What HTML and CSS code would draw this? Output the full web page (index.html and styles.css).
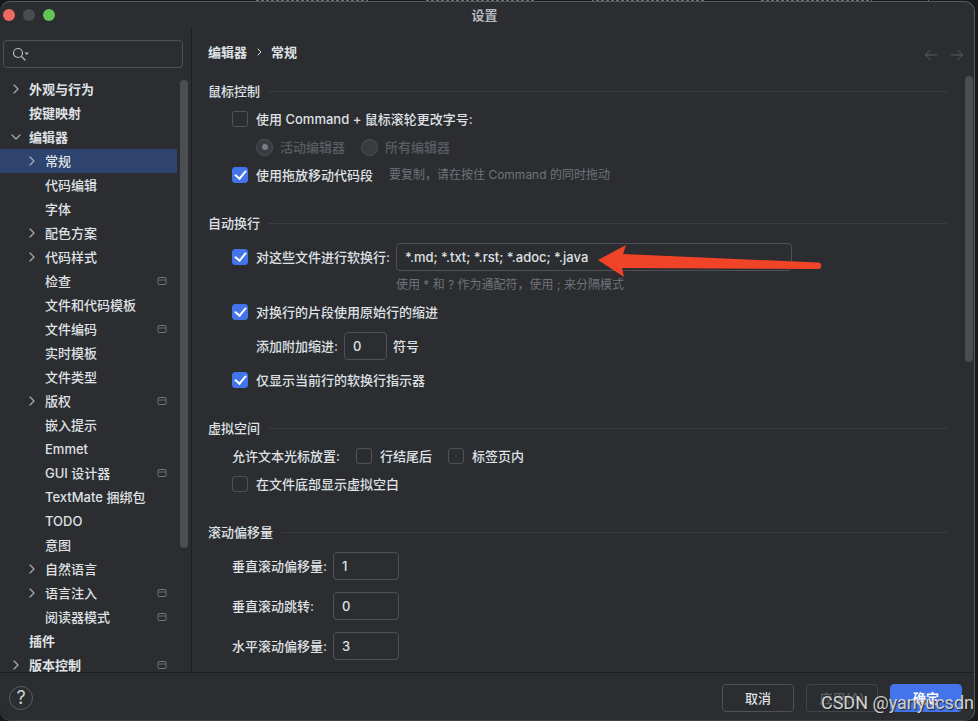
FILE: index.html
```html
<!DOCTYPE html>
<html lang="zh-CN">
<head>
    <meta charset="UTF-8">
    <meta name="viewport" content="width=device-width, initial-scale=1.0">
    <title>设置</title>
    <link rel="stylesheet" href="styles.css">
</head>
<body>
    <!-- Shared icons -->
    <svg class="sprite" aria-hidden="true">
        <symbol id="chevron" viewBox="0 0 16 16">
            <path d="M6 4 10 8l-4 4" fill="none" stroke="currentColor" stroke-width="1.200" stroke-linecap="round" stroke-linejoin="round"/>
        </symbol>
        <symbol id="project" viewBox="0 0 10 10">
            <rect x="1" y="1.5" width="8" height="7" rx="1" fill="none" stroke="currentColor"/>
            <path d="M1 4h8" stroke="currentColor"/>
        </symbol>
    </svg>

    <div class="dialog">
        <header class="titlebar">
            <div class="lights">
                <span class="light close"></span>
                <span class="light minimize"></span>
                <span class="light zoom"></span>
            </div>
            <h1>设置</h1>
        </header>

        <div class="content">
            <aside class="sidebar">
                <label class="search">
                    <svg width="20" height="16" viewBox="0 0 20 16" fill="none" stroke="currentColor" stroke-width="1.200" stroke-linecap="round">
                        <circle cx="6" cy="7" r="4.5"/>
                        <path d="m9.500 10.500 3.500 3.500"/>
                        <path d="M12.500 6.500h4.500l-2.250 2.500z" fill="currentColor" stroke="none"/>
                    </svg>
                    <input type="text" aria-label="搜索">
                </label>
                <div class="tree-wrap">
                    <nav class="tree">
                        <a href="#" class="item top"><svg class="arrow"><use href="#chevron"/></svg><span>外观与行为</span></a>
                        <a href="#" class="item top"><i class="arrow"></i><span>按键映射</span></a>
                        <a href="#" class="item top"><svg class="arrow open"><use href="#chevron"/></svg><span>编辑器</span></a>
                        <a href="#" class="item selected"><svg class="arrow"><use href="#chevron"/></svg><span>常规</span></a>
                        <a href="#" class="item"><i class="arrow"></i><span>代码编辑</span></a>
                        <a href="#" class="item"><i class="arrow"></i><span>字体</span></a>
                        <a href="#" class="item"><svg class="arrow"><use href="#chevron"/></svg><span>配色方案</span></a>
                        <a href="#" class="item"><svg class="arrow"><use href="#chevron"/></svg><span>代码样式</span></a>
                        <a href="#" class="item"><i class="arrow"></i><span>检查</span><svg class="project"><use href="#project"/></svg></a>
                        <a href="#" class="item"><i class="arrow"></i><span>文件和代码模板</span></a>
                        <a href="#" class="item"><i class="arrow"></i><span>文件编码</span><svg class="project"><use href="#project"/></svg></a>
                        <a href="#" class="item"><i class="arrow"></i><span>实时模板</span></a>
                        <a href="#" class="item"><i class="arrow"></i><span>文件类型</span></a>
                        <a href="#" class="item"><svg class="arrow"><use href="#chevron"/></svg><span>版权</span><svg class="project"><use href="#project"/></svg></a>
                        <a href="#" class="item"><i class="arrow"></i><span>嵌入提示</span></a>
                        <a href="#" class="item"><i class="arrow"></i><span>Emmet</span></a>
                        <a href="#" class="item"><i class="arrow"></i><span>GUI 设计器</span><svg class="project"><use href="#project"/></svg></a>
                        <a href="#" class="item"><i class="arrow"></i><span>TextMate 捆绑包</span></a>
                        <a href="#" class="item"><i class="arrow"></i><span>TODO</span></a>
                        <a href="#" class="item"><i class="arrow"></i><span>意图</span></a>
                        <a href="#" class="item"><svg class="arrow"><use href="#chevron"/></svg><span>自然语言</span></a>
                        <a href="#" class="item"><svg class="arrow"><use href="#chevron"/></svg><span>语言注入</span><svg class="project"><use href="#project"/></svg></a>
                        <a href="#" class="item"><i class="arrow"></i><span>阅读器模式</span><svg class="project"><use href="#project"/></svg></a>
                        <a href="#" class="item top"><i class="arrow"></i><span>插件</span></a>
                        <a href="#" class="item top"><svg class="arrow"><use href="#chevron"/></svg><span>版本控制</span><svg class="project"><use href="#project"/></svg></a>
                    </nav>
                    <div class="track"><div class="thumb tree-thumb"></div></div>
                </div>
            </aside>

            <main class="page">
                <div class="page-header">
                    <nav class="crumbs">
                        <a href="#">编辑器</a>
                        <svg width="8" height="8" viewBox="0 0 8 8" fill="none" stroke="currentColor" stroke-linecap="round" stroke-linejoin="round"><path d="m3 1 3 3-3 3"/></svg>
                        <a href="#">常规</a>
                    </nav>
                    <div class="history">
                        <button type="button" aria-label="后退" disabled>
                            <svg width="14" height="12" viewBox="0 0 14 12"><path d="M12.500 6h-11M6 1.500 1.500 6 6 10.500"/></svg>
                        </button>
                        <button type="button" aria-label="前进" disabled>
                            <svg width="14" height="12" viewBox="0 0 14 12"><path d="M1.500 6h11M8 1.500 12.500 6 8 10.500"/></svg>
                        </button>
                    </div>
                </div>

                <div class="page-body">
                    <form class="settings">
                        <section>
                            <h2>鼠标控制</h2>
                            <div class="row">
                                <label><input type="checkbox">使用 Command + 鼠标滚轮更改字号:</label>
                            </div>
                            <div class="row indent radios">
                                <label><input type="radio" name="scope" checked disabled>活动编辑器</label>
                                <label><input type="radio" name="scope" disabled>所有编辑器</label>
                            </div>
                            <div class="row">
                                <label><input type="checkbox" checked>使用拖放移动代码段</label>
                                <span class="comment">要复制，请在按住 Command 的同时拖动</span>
                            </div>
                        </section>

                        <section>
                            <h2>自动换行</h2>
                            <div class="wrap-grid">
                                <label><input type="checkbox" checked>对这些文件进行软换行:</label>
                                <div class="patterns">
                                    <input type="text" value="*.md; *.txt; *.rst; *.adoc; *.java" aria-label="文件模式">
                                    <svg class="pointer" viewBox="0 0 224 34" aria-hidden="true">
                                        <path d="M0 16 28 1l-3 9 195 8.500a3 3 0 0 1 0 6.500L24 24l2 9z" fill="#f04328"/>
                                    </svg>
                                </div>
                                <span class="hint">使用 * 和 ? 作为通配符，使用 ; 来分隔模式</span>
                            </div>
                            <div class="row">
                                <label><input type="checkbox" checked>对换行的片段使用原始行的缩进</label>
                            </div>
                            <div class="row field indent">
                                <label for="extra">添加附加缩进:</label>
                                <input type="text" id="extra" class="short" value="0">
                                <span>符号</span>
                            </div>
                            <div class="row">
                                <label><input type="checkbox" checked>仅显示当前行的软换行指示器</label>
                            </div>
                        </section>

                        <section>
                            <h2>虚拟空间</h2>
                            <div class="row">
                                <span>允许文本光标放置:</span>
                                <label><input type="checkbox">行结尾后</label>
                                <label><input type="checkbox">标签页内</label>
                            </div>
                            <div class="row">
                                <label><input type="checkbox">在文件底部显示虚拟空白</label>
                            </div>
                        </section>

                        <section>
                            <h2>滚动偏移量</h2>
                            <div class="offsets">
                                <label for="v-offset">垂直滚动偏移量:</label>
                                <input type="text" id="v-offset" value="1">
                                <label for="v-jump">垂直滚动跳转:</label>
                                <input type="text" id="v-jump" value="0">
                                <label for="h-offset">水平滚动偏移量:</label>
                                <input type="text" id="h-offset" value="3">
                            </div>
                        </section>
                    </form>
                    <div class="track"><div class="thumb page-thumb"></div></div>
                </div>
            </main>
        </div>

        <footer class="footer">
            <button type="button" class="help" aria-label="帮助">?</button>
            <div class="actions">
                <button type="button" class="btn">取消</button>
                <button type="button" class="btn" disabled>应用(A)</button>
                <button type="button" class="btn primary">确定</button>
            </div>
        </footer>
    </div>

    <div class="watermark">CSDN @yanyucsdn</div>
</body>
</html>
```
FILE: styles.css
```css
* {
    margin: 0;
    padding: 0;
    box-sizing: border-box;
}

body {
    height: 100vh;
    padding: 1px 3px 0 0;
    overflow: hidden;
    position: relative;
    background: #17181c;
    color: #dfe1e5;
    font: 500 13px/20px Inter, "Noto Sans CJK SC", sans-serif;
}

/* Sliver of the editor tabs behind the dialog */
body::before {
    content: "";
    position: absolute;
    top: 0;
    left: 256px;
    right: 48px;
    height: 1px;
    background: repeating-linear-gradient(90deg, #6a6b70 0 3px, #17181c 3px 5px);
    mask: repeating-linear-gradient(90deg, #000 0 112px, transparent 112px 168px);
}

a {
    color: inherit;
    text-decoration: none;
}

label {
    display: flex;
    align-items: center;
    white-space: nowrap;
}

.sprite {
    position: absolute;
    width: 0;
    height: 0;
}

.dialog {
    height: 100%;
    display: flex;
    flex-direction: column;
    background: #2b2d30;
    border: 1px solid #57595d;
    border-left: none;
    border-bottom-color: #3c3e42;
    border-radius: 10px;
    overflow: hidden;
}

/* Title bar */
.titlebar {
    flex: none;
    height: 26px;
    display: grid;
    grid-template-columns: 1fr auto 1fr;
    align-items: center;
    padding-right: 5px;
}

.titlebar h1 {
    color: #b4b8bf;
    font-size: 13px;
    font-weight: 700;
    line-height: 18px;
}

.lights {
    display: flex;
    gap: 8px;
    padding-left: 3px;
}

.light {
    width: 12px;
    height: 12px;
    border-radius: 50%;
}

.close { background: #ed6a5e; }
.minimize { background: #4a4c50; }
.zoom { background: #61c454; }

.content {
    flex: 1;
    min-height: 0;
    display: flex;
}

/* Sidebar */
.sidebar {
    flex: none;
    width: 192px;
    display: flex;
    flex-direction: column;
    padding-top: 12px;
    border-right: 1px solid #1e1f22;
}

.search {
    height: 28px;
    margin: 0 8px 9px 3px;
    padding-left: 8px;
    border: 1px solid #4e5157;
    border-radius: 4px;
    color: #b4b8bf;
}

.search svg {
    flex: none;
}

.search input {
    flex: 1;
    min-width: 0;
    border: none;
    background: none;
}

.tree-wrap {
    flex: 1;
    min-height: 0;
    display: flex;
    overflow: hidden;
}

.tree {
    flex: 1;
}

.item {
    height: 24px;
    display: flex;
    align-items: center;
    padding: 0 10px 0 24px;
    white-space: nowrap;
}

.item.top {
    padding-left: 8px;
    font-weight: 700;
}

.item.selected {
    background: #2e436e;
}

.arrow {
    flex: none;
    width: 16px;
    height: 16px;
    margin-right: 5px;
    color: #a8abb2;
}

.arrow.open {
    transform: rotate(90deg);
}

.project {
    width: 10px;
    height: 10px;
    margin-left: auto;
    color: #6f737a;
}

.track {
    flex: none;
    width: 14px;
    padding: 3px 3px 0;
}

.thumb {
    border-radius: 4px;
    background: #4b4d50;
}

.tree-thumb {
    height: 79%;
}

.page-thumb {
    height: 48%;
}

/* Settings page */
.page {
    flex: 1;
    min-width: 0;
    display: flex;
    flex-direction: column;
}

.page-header {
    flex: none;
    height: 48px;
    display: flex;
    align-items: center;
    justify-content: space-between;
    padding: 0 10px 0 16px;
}

.crumbs {
    display: flex;
    align-items: center;
    gap: 8px;
    font-weight: 700;
}

.history {
    display: flex;
    gap: 12px;
    padding-top: 6px;
}

.history button {
    display: flex;
    border: none;
    background: none;
}

.history svg {
    fill: none;
    stroke: #5a5d63;
    stroke-linecap: round;
    stroke-linejoin: round;
}

.page-body {
    flex: 1;
    min-height: 0;
    display: flex;
    overflow: hidden;
}

.page-body .track {
    padding: 0 1px 0 5px;
}

.settings {
    flex: 1;
    display: flex;
    flex-direction: column;
    gap: 24px;
    padding: 5px 13px 0 16px;
}

h2 {
    display: flex;
    align-items: center;
    gap: 8px;
    margin-bottom: 4px;
    font-size: 13px;
    font-weight: 500;
}

h2::after {
    content: "";
    flex: 1;
    height: 1px;
    background: #393b40;
}

.row {
    min-height: 28px;
    display: flex;
    align-items: center;
    gap: 16px;
    padding-left: 24px;
}

.row.indent {
    padding-left: 48px;
}

.row.field {
    gap: 6px;
    padding-top: 6px;
    padding-bottom: 6px;
}

.comment,
.hint {
    color: #6f737a;
    font-size: 12px;
    font-weight: 400;
}

input[type="checkbox"],
input[type="radio"] {
    appearance: none;
    flex: none;
    width: 16px;
    height: 16px;
    margin-right: 8px;
    border: 1px solid #4e5157;
    border-radius: 3px;
}

input[type="checkbox"]:checked {
    display: grid;
    place-items: center;
    border-color: #4474ea;
    background: #4474ea;
}

input[type="checkbox"]:checked::after {
    content: "";
    width: 5px;
    height: 9px;
    margin-bottom: 3px;
    border: solid #fff;
    border-width: 0 2px 2px 0;
    transform: rotate(40deg);
}

input[type="radio"] {
    display: grid;
    place-items: center;
    width: 17px;
    height: 17px;
    margin-right: 7px;
    border-radius: 50%;
    background: #393b40;
}

input[type="radio"]:checked::after {
    content: "";
    width: 6px;
    height: 6px;
    border-radius: 50%;
    background: #7a7d83;
}

.radios label {
    color: #5a5d63;
}

.settings input[type="text"] {
    height: 28px;
    padding: 0 8px;
    border: 1px solid #4e5157;
    border-radius: 4px;
    background: none;
    color: inherit;
    font: inherit;
}

.wrap-grid {
    display: grid;
    grid-template-columns: auto minmax(0, 396px);
    column-gap: 6px;
    padding: 6px 0 5px 24px;
    justify-content: start;
}

.patterns {
    position: relative;
}

.patterns input[type="text"] {
    width: 100%;
}

/* Annotation arrow over the pattern field */
.pointer {
    position: absolute;
    left: 202px;
    top: 1px;
    width: 224px;
    height: 34px;
}

.hint {
    grid-column: 2;
    margin-top: 6px;
    line-height: 16px;
}

.settings .short {
    width: 43px;
}

.offsets {
    display: grid;
    grid-template-columns: auto 66px;
    justify-content: start;
    gap: 12px 6px;
    padding: 6px 0 0 24px;
}

/* Footer */
.footer {
    flex: none;
    height: 48px;
    display: flex;
    align-items: center;
    justify-content: space-between;
    padding: 2px 12px 0 9px;
    border-top: 1px solid #1e1f22;
}

.help {
    width: 24px;
    height: 24px;
    border: 1px solid #5a5d63;
    border-radius: 50%;
    background: none;
    color: #ced0d6;
    font: 400 18px/20px Inter, sans-serif;
}

.actions {
    display: flex;
    gap: 12px;
}

.btn {
    width: 72px;
    height: 28px;
    border: 1px solid #4e5157;
    border-radius: 4px;
    background: none;
    color: inherit;
    font: inherit;
}

.btn:disabled {
    border-color: #43454a;
    color: #5a5d63;
}

.btn.primary {
    border-color: #4474ea;
    background: #4474ea;
    color: #fff;
    font-weight: 700;
}

.watermark {
    position: absolute;
    right: 4px;
    bottom: 7px;
    color: #d0d1d3;
    font: 18px/22px Roboto, sans-serif;
    text-shadow: 1px 1px 1px #222;
    pointer-events: none;
}
```
